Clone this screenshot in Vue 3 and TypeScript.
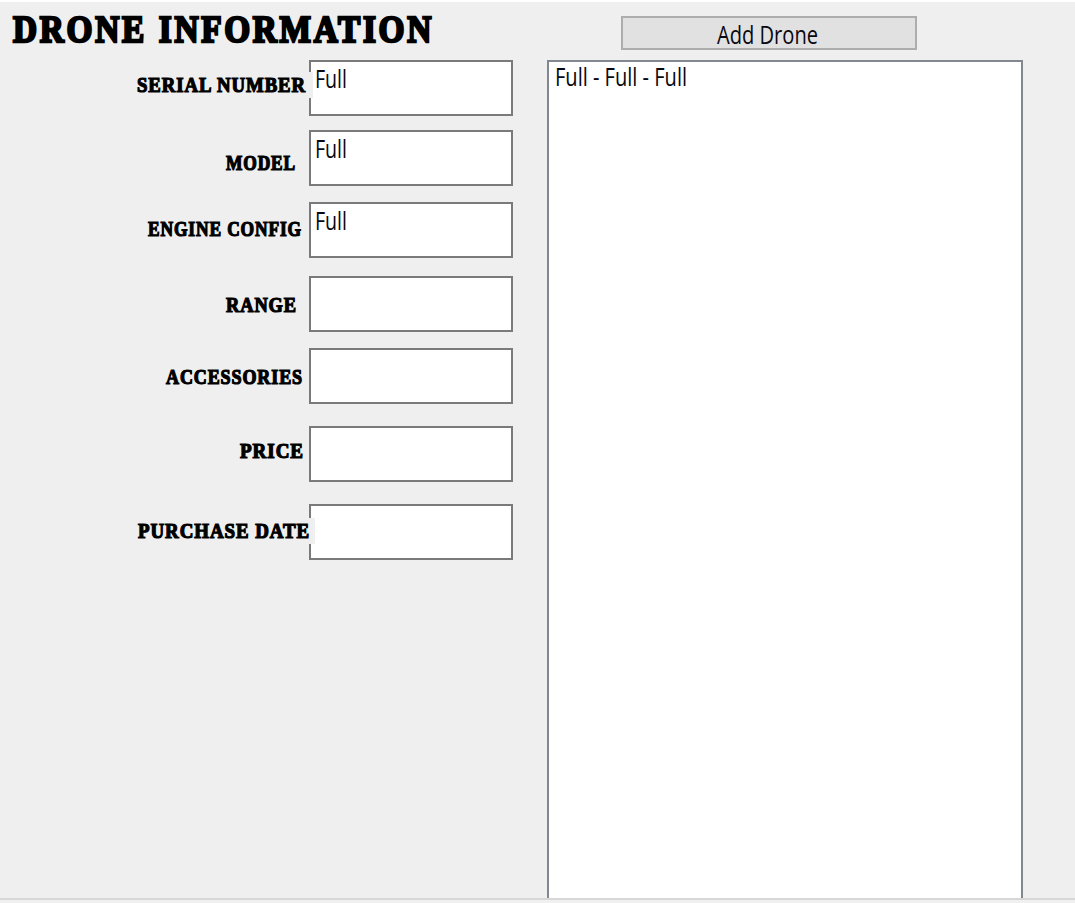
<script setup lang="ts">
interface Field {
  name: string
  label: string
  value: string
  width: number
}

const fields: Field[] = [
  { name: 'serial', label: 'SERIAL NUMBER', value: 'Full', width: 168 },
  { name: 'model', label: 'MODEL', value: 'Full', width: 69 },
  { name: 'engine', label: 'ENGINE CONFIG', value: 'Full', width: 153 },
  { name: 'range', label: 'RANGE', value: '', width: 70 },
  { name: 'accessories', label: 'ACCESSORIES', value: '', width: 136 },
  { name: 'price', label: 'PRICE', value: '', width: 63 },
  { name: 'purchase', label: 'PURCHASE DATE', value: '', width: 171 },
]

const drones: string[] = ['Full - Full - Full']
</script>

<template>
  <main class="window">
    <section class="form">
      <h1 class="title">
        <svg width="432" height="44">
          <text x="1" y="34" textLength="421" lengthAdjust="spacingAndGlyphs">DRONE INFORMATION</text>
        </svg>
      </h1>
      <div v-for="field in fields" :key="field.name" class="row" :class="field.name">
        <label class="caption">
          <svg :width="field.width" height="26">
            <text x="0" y="20" :textLength="field.width + 1" lengthAdjust="spacingAndGlyphs">{{ field.label }}</text>
          </svg>
        </label>
        <div class="box">
          <svg v-if="field.value" class="ui" width="40" height="32">
            <text x="4" y="26" textLength="32" lengthAdjust="spacingAndGlyphs">{{ field.value }}</text>
          </svg>
        </div>
      </div>
    </section>
    <section class="list-side">
      <button class="add" type="button">
        <svg class="ui" width="104" height="30">
          <text x="0" y="26" textLength="101" lengthAdjust="spacingAndGlyphs">Add Drone</text>
        </svg>
      </button>
      <div class="list">
        <div v-for="drone in drones" :key="drone" class="item">
          <svg class="ui" width="150" height="30">
            <text x="6" y="24" textLength="132" lengthAdjust="spacingAndGlyphs">{{ drone }}</text>
          </svg>
        </div>
      </div>
    </section>
  </main>
</template>

<style>
body {
  margin: 0;
  background: #f0f0f0;
}
</style>

<style scoped>
.window {
  box-sizing: border-box;
  display: flex;
  width: 1075px;
  height: 900px;
  border-top: 2px solid #fff;
  border-bottom: 2px solid #d7d7d7;
  background: #efefef;
  overflow: hidden;
}

svg {
  display: block;
  overflow: visible;
}

.form {
  width: 547px;
  flex: none;
}

.title {
  height: 58px;
  margin: 0;
  padding: 6px 0 0 12px;
  box-sizing: border-box;
}

.title text {
  font: bold 37px "Liberation Serif", serif;
  letter-spacing: 3px;
  word-spacing: 1px;
  stroke: #000;
  stroke-width: 2.4px;
}

.row {
  display: grid;
  grid-template-columns: 309px 204px;
  height: 56px;
}

.caption {
  justify-self: end;
  height: 26px;
  background: #efefef;
  z-index: 1;
}

.caption text {
  font: bold 20px "Liberation Serif", serif;
  letter-spacing: 1px;
  stroke: #000;
  stroke-width: 1.2px;
}

.box {
  box-sizing: border-box;
  height: 56px;
  border: 2px solid #7a7a7a;
  background: #fff;
}

.serial { margin-bottom: 14px; }
.serial .caption { margin: 12px -4px 0 0; padding-right: 8px; }
.model { margin-bottom: 16px; }
.model .caption { margin: 20px 14px 0 0; }
.engine { margin-bottom: 18px; }
.engine .caption { margin: 14px 8px 0 0; }
.range { margin-bottom: 16px; }
.range .caption { margin: 16px 13px 0 0; }
.accessories { margin-bottom: 22px; }
.accessories .caption { margin: 16px 7px 0 0; }
.price { margin-bottom: 22px; }
.price .caption { margin: 12px 6px 0 0; }
.purchase .caption { margin: 14px -6px 0 0; padding-right: 6px; }

.ui text {
  font: 25px "Open Sans", "Noto Sans", sans-serif;
  fill: #080810;
}

.list-side {
  display: flex;
  flex-direction: column;
  width: 476px;
}

.add {
  box-sizing: border-box;
  display: flex;
  justify-content: center;
  width: 296px;
  height: 34px;
  margin: 14px 0 10px 74px;
  padding: 0;
  border: 2px solid #adadad;
  background: #e1e1e1;
}

.list {
  flex: 1;
  border: 2px solid #828790;
  border-bottom: 0;
  background: #fff;
}
</style>
